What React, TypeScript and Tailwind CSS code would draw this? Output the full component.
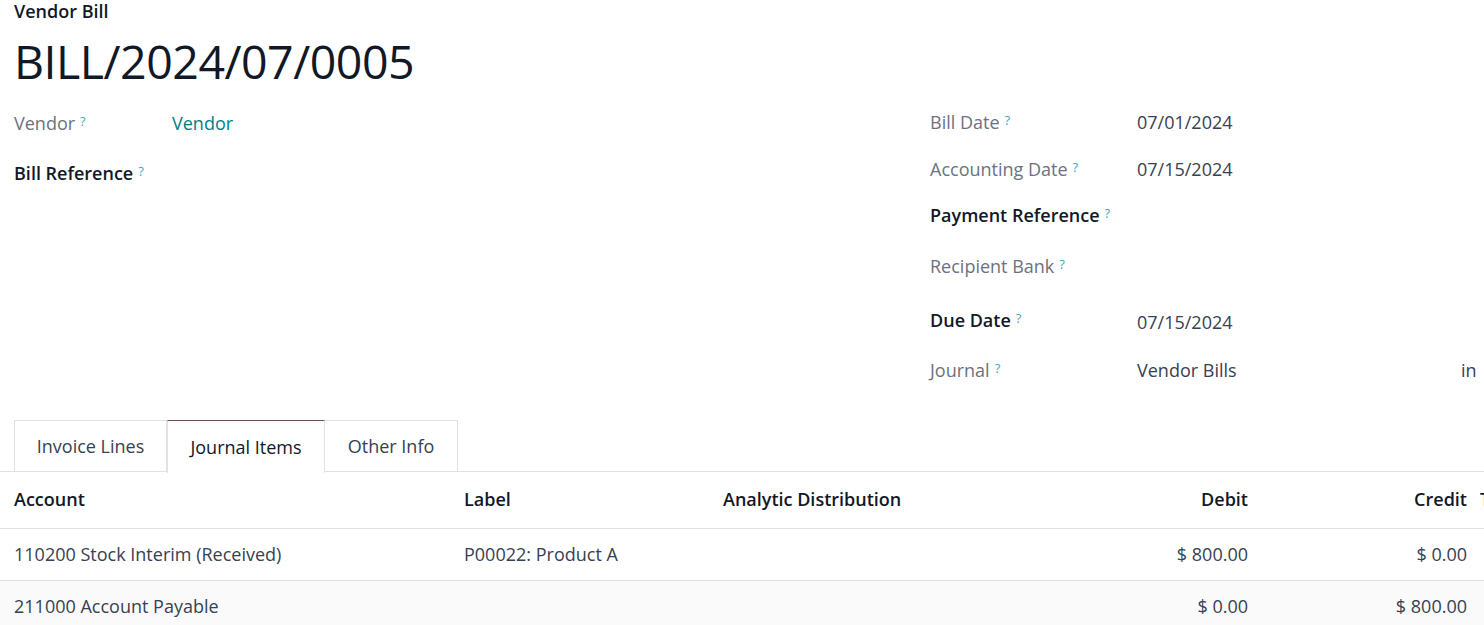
import React from "react";

//---------------------------------Data---------------------------------
interface JournalLine {
  account: string;
  label: string;
  analytic: string;
  debit: string;
  credit: string;
}

const lines: JournalLine[] = [
  {
    account: "110200 Stock Interim (Received)",
    label: "P00022: Product A",
    analytic: "",
    debit: "$ 800.00",
    credit: "$ 0.00",
  },
  {
    account: "211000 Account Payable",
    label: "",
    analytic: "",
    debit: "$ 0.00",
    credit: "$ 800.00",
  },
];

//---------------------------------Bits---------------------------------
const Help = () => (
  <sup className="ml-[5px] text-[13px] font-normal text-[#3fa7c4] relative -top-[4px]">?</sup>
);

const Label: React.FC<{ text: string; strong?: boolean }> = ({ text, strong }) => (
  <span className={strong ? "font-semibold text-[#111827]" : "text-[#6b7280]"}>
    {text}
    <Help />
  </span>
);

const App: React.FC = () => {
  //---------------------------------UI---------------------------------
  return (
    <div
      className="w-[1484px] h-[625px] overflow-hidden bg-white text-[18px] text-[#374151]"
      style={{ fontFamily: "'Open Sans', 'Noto Sans', sans-serif" }}
    >
      <div className="pl-[14px]">
        <div className="h-[22px] flex items-center font-semibold text-[#111827] text-[18px]">
          Vendor Bill
        </div>
        <h1 className="h-[78px] flex items-center text-[46.5px] font-medium text-[#111827] tracking-[-0.5px] leading-none">
          BILL/2024/07/0005
        </h1>
      </div>

      {/* header fields */}
      <div className="flex h-[320px]">
        <div className="w-[930px] pl-[14px] pt-[11px]">
          <div className="flex h-[24px] items-center">
            <div className="w-[158px]">
              <Label text="Vendor" />
            </div>
            <span className="text-[#017e84]">Vendor</span>
          </div>
          <div className="flex h-[24px] items-center mt-[26px]">
            <Label text="Bill Reference" strong />
          </div>
        </div>
        <div className="flex-1 pt-[10px]">
          <div className="flex h-[24px] items-center">
            <div className="w-[207px]">
              <Label text="Bill Date" />
            </div>
            <span>07/01/2024</span>
          </div>
          <div className="flex h-[24px] items-center mt-[23px]">
            <div className="w-[207px]">
              <Label text="Accounting Date" />
            </div>
            <span>07/15/2024</span>
          </div>
          <div className="flex h-[24px] items-center mt-[22px]">
            <Label text="Payment Reference" strong />
          </div>
          <div className="flex h-[24px] items-center mt-[27px]">
            <Label text="Recipient Bank" />
          </div>
          <div className="flex h-[24px] items-center mt-[30px]">
            <div className="w-[207px]">
              <Label text="Due Date" strong />
            </div>
            <span className="relative top-[2px]">07/15/2024</span>
          </div>
          <div className="flex h-[24px] items-center mt-[26px]">
            <div className="w-[207px]">
              <Label text="Journal" />
            </div>
            <span className="w-[324px]">Vendor Bills</span>
            <span>in</span>
          </div>
        </div>
      </div>

      {/* tabs */}
      <div className="flex pl-[14px] border-b border-[#dee2e6] h-[52px]">
        <div className="w-[153px] h-[52px] flex items-center justify-center border border-b-0 border-[#dee2e6] text-[#374151]">
          Invoice Lines
        </div>
        <div className="w-[158px] h-[53px] flex items-center justify-center border border-[#dee2e6] border-t-[#714b67] border-b-0 bg-white text-[#111827]">
          Journal Items
        </div>
        <div className="w-[133px] h-[52px] flex items-center justify-center border border-l-0 border-b-0 border-[#dee2e6] text-[#374151]">
          Other Info
        </div>
      </div>

      {/* journal items table */}
      <table className="w-[1484px] table-fixed border-collapse">
        <colgroup>
          <col className="w-[464px]" />
          <col className="w-[259px]" />
          <col className="w-[325px]" />
          <col className="w-[200px]" />
          <col className="w-[219px]" />
          <col className="w-[17px]" />
        </colgroup>
        <thead>
          <tr className="h-[56px] border-b border-[#dee2e6] text-[#111827]">
            <th className="text-left font-semibold pl-[14px]">Account</th>
            <th className="text-left font-semibold">Label</th>
            <th className="text-left font-semibold">Analytic Distribution</th>
            <th className="text-right font-semibold">Debit</th>
            <th className="text-right font-semibold">Credit</th>
            <th className="text-left font-semibold pl-[13px] overflow-hidden">T</th>
          </tr>
        </thead>
        <tbody>
          {lines.map((line, i) => (
            <tr
              key={i}
              className={`h-[52px] border-b border-[#dee2e6] ${i % 2 === 1 ? "bg-[#fafafa]" : "bg-white"}`}
            >
              <td className="pl-[14px]">{line.account}</td>
              <td>{line.label}</td>
              <td>{line.analytic}</td>
              <td className="text-right">{line.debit}</td>
              <td className="text-right">{line.credit}</td>
              <td></td>
            </tr>
          ))}
        </tbody>
      </table>
    </div>
  );
};

export default App;
